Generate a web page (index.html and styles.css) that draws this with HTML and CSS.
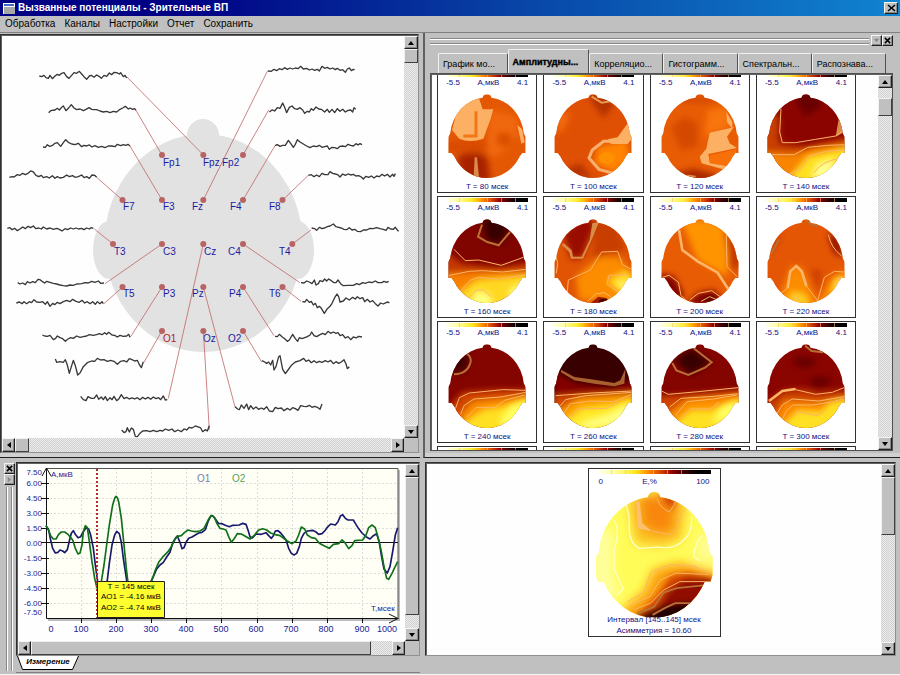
FILE: index.html
```html
<!DOCTYPE html>
<html lang="ru">
<head>
<meta charset="utf-8">
<title>Вызванные потенциалы - Зрительные ВП</title>
<link rel="stylesheet" href="styles.css">
</head>
<body>
<svg class="defs" aria-hidden="true">
  <defs>
    <clipPath id="head">
      <ellipse cx="0" cy="130" rx="111" ry="121"/>
      <circle cx="0" cy="14" r="14"/>
      <path d="M-110 116h220l6 12v48h-10l-6 8h-200l-6-8h-10v-48z"/>
    </clipPath>
    <clipPath id="bighead">
      <ellipse cx="281" cy="303" rx="170" ry="185"/>
      <circle cx="281" cy="121" r="19"/>
      <path d="M112 288h340l9 16v52l-7 22h-346l-6-22v-52z"/>
    </clipPath>
    <filter id="soft" x="-40%" y="-40%" width="180%" height="180%"><feGaussianBlur stdDeviation="9"/></filter>
    <filter id="softer" x="-40%" y="-40%" width="180%" height="180%"><feGaussianBlur stdDeviation="16"/></filter>
  </defs>
</svg>

<header class="title-bar">
  <svg class="app-icon" viewBox="0 0 12 11" aria-hidden="true"><path fill="#fff" d="M0 0h12v11H0z"/><path fill="#a8a8a8" d="M1 4h11v7H1z"/><path fill="#4468c8" d="M1 1h10v2H1z"/></svg>
  <h1>Вызванные потенциалы - Зрительные ВП</h1>
  <button class="btn close-main" aria-label="Закрыть"><svg viewBox="0 0 9 8"><path d="M1 1l7 6M8 1L1 7" stroke="#000" stroke-width="1.6"/></svg></button>
</header>
<nav class="menu">
  <button>Обработка</button><button>Каналы</button><button>Настройки</button><button>Отчет</button><button>Сохранить</button>
</nav>

<main class="workspace">
  <section class="pane montage">
    <div class="scroller">
      <div class="view">
        <svg class="montage-map" viewBox="2 36 402 402" role="img" aria-label="Схема отведений">
          <g fill="#e2e2e2">
            <ellipse cx="203.500" cy="243" rx="99" ry="109"/><circle cx="203" cy="135" r="16"/>
            <ellipse cx="109" cy="250" rx="16" ry="29"/><ellipse cx="298" cy="250" rx="16" ry="29"/>
          </g>
          <g class="labels">
            <text x="163" y="166">Fp1</text><text x="203" y="166">Fpz</text><text x="222" y="166">Fp2</text>
            <text x="123" y="210">F7</text><text x="163" y="210">F3</text><text x="192" y="210">Fz</text><text x="230" y="210">F4</text><text x="269" y="210">F8</text>
            <text x="114" y="255">T3</text><text x="163" y="255">C3</text><text x="204" y="255">Cz</text><text x="228" y="255">C4</text><text x="279" y="255">T4</text>
            <text x="123" y="297">T5</text><text x="163" y="297">P3</text><text x="192" y="297">Pz</text><text x="229" y="297">P4</text><text x="269" y="297">T6</text>
            <text class="picked" x="163" y="342">O1</text><text x="203" y="342">Oz</text><text x="228" y="342">O2</text>
          </g>
          <g transform="scale(.33333)">
            <path class="lead" d="M380 230L610 465M408 331L486 465M390 438L486 600M290 532L367 600M803 212L610 600M806 330L729 465M825 437L729 600M925 526L848 600"/>
            <g class="wave">
              <polyline points="118,228 125,230 132,226 138,233 145,235 150,226 157,236 165,228 172,223 178,226 185,220 192,218 200,230 207,235 215,226 222,218 230,220 238,214 245,222 252,230 260,238 268,228 274,226 282,232 290,225 297,229 304,235 312,226 320,229 328,219 335,224 342,217 350,218 358,222 362,218 370,230 375,226 380,234"/>
              <polyline points="146,338 152,332 165,330 172,325 178,330 185,322 190,318 198,332 205,325 214,314 222,324 230,329 240,327 250,332 258,328 267,323 275,328 282,329 290,329 300,333 310,336 320,334 330,338 340,334 350,336 360,328 368,324 376,319 385,327 390,324 398,328 404,326 408,331"/>
              <polyline points="129,441 136,442 142,434 148,439 156,437 165,430 172,428 182,439 190,428 197,419 205,427 215,432 225,434 235,430 245,440 252,436 260,438 268,435 276,441 285,437 295,442 305,439 315,443 325,438 335,438 345,440 352,433 362,437 370,434 378,436 384,433 390,438"/>
              <polyline points="28,532 36,530 42,531 52,524 60,526 68,520 76,524 84,520 92,513 100,516 108,526 116,530 124,526 130,533 140,530 148,534 157,527 165,535 172,530 180,534 190,532 200,525 208,530 218,527 225,532 235,530 245,525 252,533 260,530 268,535 276,525 284,526 290,532"/>
            </g>
          </g>
          <g transform="translate(0 225) scale(.33333)">
            <path class="lead" d="M283 12L339 57M486 57L315 176M368 186L312 236M486 186L392 335M486 317L432 412M610 57L505 520M610 317L628 615M610 186L705 546M729 57L900 173M848 186L903 229M729 186L822 332M729 317L785 411M877 57L933 15"/>
            <g class="wave">
              <polyline points="22,10 30,8 36,14 44,10 52,17 60,12 68,6 76,11 84,4 92,8 100,3 108,11 116,9 124,12 130,6 140,12 150,9 160,13 170,10 178,13 186,18 195,11 203,14 212,9 220,12 228,9 236,12 244,10 252,14 260,9 268,12 274,8 280,10"/>
              <polyline points="53,173 60,177 68,174 76,179 82,170 90,174 98,170 106,173 114,163 120,164 126,169 134,174 140,169 150,172 160,175 170,177 180,180 190,182 200,183 210,180 220,181 230,177 245,176 255,173 265,174 275,169 285,172 295,168 302,175 312,174"/>
              <polyline points="49,234 58,231 66,236 72,230 80,236 88,230 95,233 102,224 110,231 120,232 128,230 136,238 142,230 150,244 158,235 164,239 172,232 180,236 190,230 200,226 210,230 218,223 228,229 238,232 246,226 254,234 262,230 270,236 278,230 286,238 292,230 300,236 306,230 310,236"/>
              <polyline points="127,330 134,333 142,334 150,331 160,344 166,341 172,333 180,338 188,341 196,349 204,342 212,338 220,340 230,333 240,337 250,335 260,333 268,329 280,331 290,329 298,326 306,329 314,323 320,328 326,322 336,330 344,331 352,336 360,331 370,334 380,333 386,328 390,337"/>
              <polyline points="166,402 170,412 180,410 190,412 196,404 202,420 208,445 214,425 220,406 226,422 233,450 240,444 250,425 262,413 275,408 284,409 292,400 302,405 312,404 322,409 332,406 342,409 352,418 362,409 372,407 380,411 388,401 396,404 404,408 412,406 418,419 424,428 430,410"/>
              <polyline points="242,514 250,524 258,527 264,515 274,520 282,520 290,510 296,523 304,516 310,524 316,515 322,527 330,518 336,524 342,514 350,527 357,521 364,509 372,521 380,517 388,522 396,519 404,522 412,518 420,524 428,517 436,522 444,517 452,523 460,516 468,521 476,518 482,524 490,513 496,525 502,524"/>
              <polyline points="365,615 372,623 378,620 382,608 388,621 394,609 400,613 406,634 412,635 420,625 428,618 440,617 450,620 460,616 470,620 480,616 488,618 496,612 506,616 516,612 524,620 534,615 544,620 552,612 560,615 568,607 576,609 586,603 594,606 602,609 608,620 616,614 622,618 628,602"/>
            </g>
          </g>
          <g class="wave" transform="translate(200 30) scale(.33333)">
            <polyline points="204,123 214,124 222,118 230,122 238,116 246,119 254,113 262,118 270,114 278,117 286,114 294,116 302,109 310,117 320,115 328,120 336,117 344,121 352,118 358,123 366,109 374,115 382,112 390,117 398,114 406,119 412,115 420,121 428,119 436,127 442,117 448,114 454,122 460,118 464,120"/>
            <polyline points="208,246 216,240 224,243 232,233 240,235 248,219 254,232 260,248 268,232 276,228 284,236 292,238 300,233 308,240 314,250 322,244 328,246 334,236 340,241 348,231 356,237 364,238 374,246 382,238 388,247 396,238 404,248 412,236 420,244 428,238 436,246 444,241 452,240 458,246 462,233 467,238"/>
            <polyline points="225,347 232,344 240,349 248,346 256,346 265,331 272,340 280,352 286,343 292,329 300,336 310,342 320,348 330,353 340,348 350,350 358,346 366,352 374,350 382,348 388,358 396,352 404,353 412,356 420,349 428,348 436,350 444,343 452,346 460,348 468,341 474,345 480,341 486,344"/>
            <polyline points="325,436 334,434 342,440 350,435 358,440 366,430 374,434 384,434 390,425 398,430 406,432 414,435 420,441 428,432 436,436 444,432 452,435 460,433 468,438 476,437 484,441 490,447 498,439 506,442 514,438 522,444 530,438 538,440 546,433 554,438 562,433 570,441 578,433 582,439 586,431"/>
            <polyline points="335,594 344,596 350,601 358,592 366,596 374,594 382,590 390,588 400,582 408,590 416,592 424,594 432,598 440,599 448,593 456,600 464,598 472,604 482,605 490,600 500,600 510,595 520,596 530,593 540,596 550,598 558,601 564,592 572,597 580,598 586,592 592,600 596,604"/>
          </g>
          <g class="wave" transform="translate(200 240) scale(.33333)">
            <polyline points="303,128 312,129 320,123 328,126 336,131 343,120 348,135 355,131 360,122 368,125 374,117 380,123 386,117 394,122 402,128 408,128 414,120 422,131 430,137 445,136 460,136 470,131 478,134 488,128 496,130 506,126 516,128 526,123 534,128 545,128 552,124 560,127 566,124"/>
            <polyline points="307,185 315,186 320,178 328,187 334,184 340,195 346,190 352,203 358,199 364,205 373,220 382,206 390,199 396,190 404,173 411,162 416,170 420,186 430,183 438,174 448,180 458,172 466,177 472,170 480,176 488,173 494,185 502,178 510,186 518,182 526,191 534,198 542,189 550,192 558,188 564,186 568,189"/>
            <polyline points="225,289 232,290 238,283 246,290 254,296 262,304 268,300 278,283 286,296 293,304 298,293 306,296 314,293 322,290 330,285 335,276 342,287 350,290 360,284 368,280 376,284 384,274 392,280 400,276 408,280 414,278 420,287 428,284 436,294 444,290 452,299 460,291 468,294 476,289 486,291"/>
            <polyline points="186,362 194,366 200,370 206,366 212,375 218,361 222,390 228,380 236,350 240,347 248,388 256,401 264,390 274,376 286,366 300,362 311,355 318,364 326,360 334,368 342,362 350,368 358,364 366,367 376,362 384,366 392,361 400,371 408,365 416,370 424,366 432,359 438,372 442,386 448,380"/>
            <polyline points="105,500 113,507 118,509 124,495 132,505 140,492 146,509 152,497 160,507 168,501 176,508 184,504 192,508 200,500 208,513 218,515 226,502 234,506 244,504 252,512 262,505 270,510 278,503 286,506 294,511 302,497 312,499 320,500 328,496 336,502 344,499 352,502 360,508 366,492"/>
          </g>
          <g fill="#b96464">
            <circle cx="162" cy="155" r="3"/><circle cx="203.300" cy="155" r="3"/><circle cx="243" cy="155" r="3"/>
            <circle cx="122.500" cy="200" r="3"/><circle cx="162" cy="200" r="3"/><circle cx="203.300" cy="200" r="3"/><circle cx="243" cy="200" r="3"/><circle cx="282.500" cy="200" r="3"/>
            <circle cx="113" cy="244" r="3"/><circle cx="162" cy="244" r="3"/><circle cx="203.300" cy="244" r="3"/><circle cx="243" cy="244" r="3"/><circle cx="292.300" cy="244" r="3"/>
            <circle cx="122.500" cy="287" r="3"/><circle cx="162" cy="287" r="3"/><circle cx="203.300" cy="287" r="3"/><circle cx="243" cy="287" r="3"/><circle cx="282.500" cy="287" r="3"/>
            <circle cx="162" cy="331" r="3"/><circle cx="203.300" cy="331" r="3"/><circle cx="243" cy="331" r="3"/>
          </g>
        </svg>
      </div>
      <div class="vbar"><button class="btn arrow up" aria-label="Вверх"></button><span class="thumb short"></span><button class="btn arrow down last" aria-label="Вниз"></button></div>
      <div class="hbar"><button class="btn arrow left" aria-label="Влево"></button><span class="thumb short"></span><button class="btn arrow right last" aria-label="Вправо"></button></div>
    </div>
  </section>

  <section class="pane maps">
    <div class="grip-row"><span class="grip"></span><button class="btn mini" aria-label="Свернуть"><svg viewBox="0 0 8 8"><path d="M1 2h6L4 6z" fill="#888"/></svg></button><button class="btn mini" aria-label="Закрыть панель"><svg viewBox="0 0 8 8"><path d="M1 1l6 6M7 1L1 7" stroke="#000" stroke-width="1.8"/></svg></button></div>
    <div class="tabs">
      <button class="tab first">График мо...</button><button class="tab active">Амплитудны...</button><button class="tab">Корреляцио...</button><button class="tab">Гистограмм...</button><button class="tab">Спектральн...</button><button class="tab">Распознава...</button>
    </div>
    <div class="scroller maps-scroller">
      <div class="view">
        <div class="cards">
          <figure class="card"><div class="scale"></div><div class="range"><span>-5.5</span><span>А,мкВ</span><span>4.1</span></div>
            <svg viewBox="-117 -1 234 255"><g clip-path="url(#head)"><g transform="translate(-189 -193)">
              <path fill="#e45804" d="M60 180h260v280H60z"/>
              <g filter="url(#soft)"><path fill="#f06808" d="M200 240l80 20v60l-60 60-50-10 20-50z"/><path fill="#a82400" d="M100 380l50-20 40 20 10 80-90-10z"/><path fill="#d84c04" d="M220 310h40v36h-40zM70 330h120v40H70z"/></g>
              <path fill="#fcb064" d="M100 240q20-40 66-32l10 30h32l-8 28-22 60q-40 14-72 0L84 300z"/><path fill="#fcb064" d="M280 285l14 12 8 40-10 4z"/>
              <path fill="none" stroke="#f07818" stroke-width="9" d="M156 244v74h-38"/><path fill="#d88c48" d="M152 382h7l6 60h-16z"/></g></g></svg>
            <figcaption>T = 80 мсек</figcaption></figure>
          <figure class="card"><div class="scale"></div><div class="range"><span>-5.5</span><span>А,мкВ</span><span>4.1</span></div>
            <svg viewBox="-117 -1 234 255"><g clip-path="url(#head)"><g transform="translate(-508 -193)">
              <path fill="#e05004" d="M380 180h260v280H380z"/>
              <g filter="url(#soft)"><path fill="#b43000" d="M490 195h70l10 30-30 40zM400 430l70-30 40 50z"/><path fill="#ff8404" d="M520 350l90-20 10 60-50 40-60-30z"/><path fill="#f46c08" d="M440 250h-40v60l20-10z"/></g>
              <ellipse cx="550" cy="384" rx="24" ry="18" fill="#ff9000"/>
              <path fill="none" stroke="#f8b070" stroke-width="9" d="M610 334h-70l-34 26-10 24 30 34 44 12"/><path fill="#fcb064" d="M612 280l-30 42-30 6 10 14h50l16-20z"/><path fill="none" stroke="#e89850" stroke-width="6" d="M504 200l30 18 28-4"/></g></g></svg>
            <figcaption>T = 100 мсек</figcaption></figure>
          <figure class="card"><div class="scale"></div><div class="range"><span>-5.5</span><span>А,мкВ</span><span>4.1</span></div>
            <svg viewBox="-117 -1 234 255"><g clip-path="url(#head)"><g transform="translate(-167 -193)">
              <path fill="#e85c04" d="M40 180h260v280H40z"/>
              <g filter="url(#soft)"><path fill="#d44804" d="M80 290l40-30 40 20v70l-50 10zM110 200h100v20H110z"/><path fill="#a82800" d="M90 430l60-14 70 20v30H90z"/><path fill="#f87408" d="M190 240l60-10 10 60-80 30z"/></g>
              <path fill="#fcb064" d="M246 246l18 30v20l-16-20zM196 308l72-16-20 28 8 20 22 14-86 18 4 24 56 12-8 12-72-20-6-20 20-24z"/><path fill="#f87008" d="M196 376l80-18v30l-30 20-50-8z"/><path fill="none" stroke="#d88c48" stroke-width="5" d="M128 436l26 4"/></g></g></svg>
            <figcaption>T = 120 мсек</figcaption></figure>
          <figure class="card"><div class="scale"></div><div class="range"><span>-5.5</span><span>А,мкВ</span><span>4.1</span></div>
            <svg viewBox="-117 -1 234 255"><g clip-path="url(#head)"><g transform="translate(-485 -193)">
              <path fill="#8c0400" d="M360 180h260v280H360z"/>
              <g filter="url(#soft)"><path fill="#680000" d="M450 190h80v40l-50 30z"/><path fill="#c84000" d="M350 220l54 40v80l80 10 130-30v60H350z"/><path fill="#f88404" d="M350 366l100 6 60-20 110-10v120H350z"/><path fill="#ffe020" d="M440 440l50-60 130-30v110H440z"/></g>
              <path filter="url(#soft)" fill="#ffff90" d="M500 440l20-40 50-16-10 70z"/><path fill="#d88c48" d="M584 262l16 44-26 14z"/>
              <path class="iso" d="M410 236l-4 70 8 32 40 0 60-10 60-10 24-16M370 374l80 0 40-22 60-6 60-2M434 432l40-20 20-34 50-14 56-4M510 428q20-34 80-44"/></g></g></svg>
            <figcaption>T = 140 мсек</figcaption></figure>

          <figure class="card"><div class="scale"></div><div class="range"><span>-5.5</span><span>А,мкВ</span><span>4.1</span></div>
            <svg viewBox="-117 -1 234 255"><g clip-path="url(#head)"><g transform="translate(-173 -88)">
              <path fill="#800400" d="M50 80h260v280H50z"/>
              <g filter="url(#soft)"><path fill="#380000" d="M160 80h90l-30 80-50-10z"/><path fill="#c43800" d="M40 180l60 40 110 14 100-20v50H40z"/><path fill="#f88004" d="M40 250l130-6 140 0v100H40z"/><path fill="#ffd820" d="M90 310l50-40 170-16v100H100z"/></g>
              <path filter="url(#soft)" fill="#ffff80" d="M120 345l20-44 40 10 14 40zM240 300l50-30-20 60-30 10z"/>
              <path class="iso dark" d="M158 104l-12 36 28 16 34 10 34-40"/><path class="iso" d="M74 178l34 34 40-2 68 16 66-24M60 256l60-12 40-2 60 4 70-8M94 302l30-32 24-8 60 6 80-14M120 322l22-22h20l24 20"/></g></g></svg>
            <figcaption>T = 160 мсек</figcaption></figure>
          <figure class="card"><div class="scale"></div><div class="range"><span>-5.5</span><span>А,мкВ</span><span>4.1</span></div>
            <svg viewBox="-117 -1 234 255"><g clip-path="url(#head)"><g transform="translate(-492 -88)">
              <path fill="#e05404" d="M370 80h260v280H370z"/>
              <g filter="url(#soft)"><path fill="#980c00" d="M400 130l60-50 40 20-40 100-30 10z"/><path fill="#c83c00" d="M500 90l60 10 30 80-40 10-60 20z"/><path fill="#fc8c04" d="M440 260l70-60 60 0 50 60-40 80-130-10z"/><path fill="#ffd820" d="M536 270l60-30 20 30-30 50z"/></g>
              <path filter="url(#soft)" fill="#ffff80" d="M560 280l40-10-20 28z"/><path fill="#9c1c00" d="M486 338l22-18 24 4 20 20z"/><ellipse cx="523" cy="336" rx="14" ry="10" fill="#480000"/>
              <path fill="#d88c48" d="M490 100l20-4-18 44-30 66h-36l-6-20-22-22 6-4 24 20 4 20 26 0 24-50z"/>
              <path class="iso" d="M414 318l4-48 66-30 34-54 48-2 14 40 28 14M596 254l-56 2-6 26 24 18 16 10M476 334l24-22 26-4 30 20M378 186l8 34-4 30"/></g></g></svg>
            <figcaption>T = 180 мсек</figcaption></figure>
          <figure class="card"><div class="scale"></div><div class="range"><span>-5.5</span><span>А,мкВ</span><span>4.1</span></div>
            <svg viewBox="-117 -1 234 255"><g clip-path="url(#head)"><g transform="translate(-167 -88)">
              <path fill="#e85c04" d="M40 80h260v280H40z"/>
              <g filter="url(#soft)"><path fill="#ff9404" d="M110 90h120l20 100 0 70-90-50z"/><path fill="#800400" d="M40 250l50 10 30 60-40 20zM120 350l40-40 50-10 30 40z"/><path fill="#c43800" d="M250 120l40 60v60l-34-10z"/></g>
              <path filter="url(#soft)" fill="#300000" d="M170 340l26-18 26 14z"/>
              <path class="iso wide" d="M104 120l10 60 46 34 60 34 32 50"/><path class="iso" d="M246 134l2 96 30 30M54 262l20-6 28 20 8 40 20 20M136 330l26-20 40-8 28 20M170 334l26-14 24 10"/></g></g></svg>
            <figcaption>T = 200 мсек</figcaption></figure>
          <figure class="card"><div class="scale"></div><div class="range"><span>-5.5</span><span>А,мкВ</span><span>4.1</span></div>
            <svg viewBox="-117 -1 234 255"><g clip-path="url(#head)"><g transform="translate(-485 -88)">
              <path fill="#e45604" d="M360 80h260v280H360z"/>
              <g filter="url(#soft)"><path fill="#c83c00" d="M500 240h30l-6 70zM370 200l40-60-30-10z"/><path fill="#8c0c00" d="M550 130l30 10 20 60-30-10z"/><path fill="#fc8c04" d="M400 340l40-110 30 0 50 110 40-80 50-20v110z"/><path fill="#ffd020" d="M430 345l10-40 40 6 20 40zM560 290l30-30 20 10-40 60z"/></g>
              <path filter="url(#soft)" fill="#ffff70" d="M570 280l20-20v30z"/>
              <path class="iso wide" d="M430 294l8-50 18-16 16 16 14 44"/><path class="iso" d="M410 310l20-16M486 288l34 44 20-70 30-18 30 2M444 334l4-10 12-2 6 12M574 290l10-26 10-4M552 134q8 40 40 64"/><path class="iso dark" d="M484 90l18 14 20 4M404 148l-24 44"/></g></g></svg>
            <figcaption>T = 220 мсек</figcaption></figure>

          <figure class="card"><div class="scale"></div><div class="range"><span>-5.5</span><span>А,мкВ</span><span>4.1</span></div>
            <svg viewBox="-117 -1 234 255"><g clip-path="url(#head)"><g transform="translate(-173 -462)">
              <path fill="#840400" d="M50 450h260v280H50z"/>
              <g filter="url(#soft)"><path fill="#400000" d="M60 490h60l-10 50-40 10z"/><path fill="#d04400" d="M60 650l40-44 100-8 110 0v130H90z"/><path fill="#fc9004" d="M90 680l40-46 80-8 100-10v120H90z"/><path fill="#ffe020" d="M100 700l60-40 60-10 90-30v120H100z"/></g>
              <path filter="url(#soft)" fill="#ffff60" d="M210 690l30-40 50-20-10 50-60 30z"/>
              <path class="iso dark" d="M112 490q14 8 12 24-8 36-50 38"/><path class="iso" d="M78 656l12-34 30-14 100-10 70 2M94 672l10-26 30-20 80-6 76-14M112 680l28-28h56l30-22 60-16"/></g></g></svg>
            <figcaption>T = 240 мсек</figcaption></figure>
          <figure class="card"><div class="scale"></div><div class="range"><span>-5.5</span><span>А,мкВ</span><span>4.1</span></div>
            <svg viewBox="-117 -1 234 255"><g clip-path="url(#head)"><g transform="translate(-492 -462)">
              <path fill="#380000" d="M370 450h260v280H370z"/>
              <g filter="url(#soft)"><path fill="#840400" d="M370 540l70 36 110 14 70-30v60H370z"/><path fill="#d44800" d="M370 616l120-8 130-6v130H370z"/><path fill="#fca004" d="M390 660l60-36 170-12v120H390z"/><path fill="#ffe828" d="M410 690l50-36 90-10 70-20v110H400z"/></g>
              <path filter="url(#soft)" fill="#ffff80" d="M440 700l100-30 60-34-20 60-100 20z"/>
              <path fill="#a8602c" d="M590 534l-4 46-30 8-60-8-60-10-40-24 0-8 40 22 60 8 60 10 18-8z"/><path class="iso" d="M380 616l110-8 120-6M390 650l20-22 60-12 140-10M404 670l20-30 60-8 70 2 60-24M424 680l20-24 90-2 30-18"/></g></g></svg>
            <figcaption>T = 260 мсек</figcaption></figure>
          <figure class="card"><div class="scale"></div><div class="range"><span>-5.5</span><span>А,мкВ</span><span>4.1</span></div>
            <svg viewBox="-117 -1 234 255"><g clip-path="url(#head)"><g transform="translate(-167 -462)">
              <path fill="#840400" d="M40 450h260v280H40z"/>
              <g filter="url(#soft)"><path fill="#380000" d="M90 510l50-36 60 40-60 40z"/><path fill="#d04400" d="M40 618l110-8 150-12v130H40z"/><path fill="#fc9004" d="M70 670l60-44 170-14v120H70z"/><path fill="#ffe020" d="M90 700l50-40 60 0 100-36v110H90z"/></g>
              <path filter="url(#soft)" fill="#ffff60" d="M200 700l30-50 50-20-10 50z"/>
              <path class="iso dark" d="M148 474l54 42-20 16-50 22-36-14-12-22"/><path class="iso" d="M52 602l20 10 90-8 120-12M76 650l34-26 100-6 70-8M94 674l34-40 80-8 70-12M110 682l28-26h60l26-20"/></g></g></svg>
            <figcaption>T = 280 мсек</figcaption></figure>
          <figure class="card"><div class="scale"></div><div class="range"><span>-5.5</span><span>А,мкВ</span><span>4.1</span></div>
            <svg viewBox="-117 -1 234 255"><g clip-path="url(#head)"><g transform="translate(-485 -462)">
              <path fill="#8a0400" d="M360 450h260v280H360z"/>
              <g filter="url(#soft)"><path fill="#680000" d="M500 560h60l-10 30h-50zM450 500h60v30h-60z"/><path fill="#c83c00" d="M360 640l60-40 60-4 40 12 90-10v130H370z"/><path fill="#fc8804" d="M390 680l30-50 100 4 100-16v110H390z"/><path fill="#ffe020" d="M420 700l40-40 70 4 30-30 60-10v110H400z"/></g>
              <path class="iso dark" d="M482 466l20 16 34 4"/><path class="iso wide" d="M374 632l40-30 40-6"/><path class="iso" d="M454 598l60 14 50-6 40-16M394 676l20-32 30-18 80 6 80-14M412 692l14-30 20-18 60 0 60-10 30-8M450 676l10-12 60 12 18-14"/></g></g></svg>
            <figcaption>T = 300 мсек</figcaption></figure>

          <figure class="card"><div class="scale"></div></figure><figure class="card"><div class="scale"></div></figure><figure class="card"><div class="scale"></div></figure><figure class="card"><div class="scale"></div></figure>
        </div>
      </div>
      <div class="vbar"><button class="btn arrow up" aria-label="Вверх"></button><span class="thumb maps-thumb"></span><button class="btn arrow down last" aria-label="Вниз"></button></div>
    </div>
  </section>

  <section class="pane chart">
    <div class="side-grip"><button class="btn mini" aria-label="Закрыть панель"><svg viewBox="0 0 8 8"><path d="M1 1l6 6M7 1L1 7" stroke="#000" stroke-width="1.8"/></svg></button><button class="btn mini" aria-label="Развернуть"><svg viewBox="0 0 8 8"><path d="M2 1v6l4-3z" fill="#888"/></svg></button><span class="grip upright"></span></div>
    <div class="chart-body">
      <div class="scroller">
        <div class="view">
          <svg class="plot" viewBox="18 464 388 177" role="img" aria-label="Амплитуда по каналам O1 и O2">
            <path fill="#bcbcbc" d="M48 470h352v151H48z"/>
            <path fill="#fffff6" d="M46 468h352v150H46z"/>
            <path class="gridlines" d="M46 483.500h352M46 498.500h352M46 513.500h352M46 528.500h352M46 558.500h352M46 573.500h352M46 588.500h352M46 603.500h352M81.500 468v150M116.500 468v150M151.500 468v150M186.500 468v150M221.500 468v150M257.500 468v150M292.500 468v150M327.500 468v150M362.500 468v150"/>
            <path fill="none" stroke="#555" d="M46 468.500h352v150"/>
            <path fill="none" stroke="#111" d="M46.500 468v150.500h352M46 542.500h352M41 483.500h8M41 498.500h8M41 513.500h8M41 528.500h8M41 542.500h5M41 558.500h8M41 573.500h8M41 588.500h8M41 603.500h8M81.500 619v4M116.500 619v4M151.500 619v4M186.500 619v4M221.500 619v4M257.500 619v4M292.500 619v4M327.500 619v4M362.500 619v4M42 476l4.500-8 4.500 8M389 614l9 4.500-9 4.500"/>
            <g transform="translate(0 455) scale(.33333)" fill="none" stroke-width="5" stroke-linejoin="round">
              <g stroke="#18186c">
                <polyline points="138,212 146,225 152,255 158,280 166,294 174,292 180,285 188,288 194,293 202,284 208,258 214,235 220,227 226,238 234,248 242,245 250,230 258,218 266,222 272,240 280,280 286,330 292,372 294,400"/>
                <polyline points="318,400 322,375 328,325 336,270 344,240 350,229 358,236 364,262 370,310 376,350 382,390"/>
                <polyline points="450,385 460,365 470,342 480,330 490,322 500,306 510,292 518,264 526,250 532,243 540,262 546,281 552,278 558,262 566,250 576,246 586,240 596,234 606,232 616,224 624,200 632,184 638,182 646,192 655,205 666,206 676,211 688,215 698,211 718,210 728,205 738,208 744,225 750,245 757,249 768,237 784,238 798,233 806,242 814,250 820,242 826,228 834,227 842,234 850,244 858,255 866,280 874,295 882,300 890,295 898,275 904,250 912,235 922,228 938,226 948,231 956,238 966,236 974,228 982,217 992,207 1006,210 1014,200 1022,182 1028,179 1036,190 1044,195 1060,195 1066,205 1074,218 1086,234 1098,245 1110,252 1120,242 1130,236 1138,262 1144,300 1152,342 1162,354 1170,335 1178,290 1186,240 1193,218"/>
              </g>
              <g stroke="#107018">
                <polyline points="138,212 144,222 152,242 160,252 168,252 176,238 184,231 194,231 204,238 212,248 218,255 226,280 234,297 240,294 246,270 250,230 256,212 262,218 268,260 276,320 284,370 291,400"/>
                <polyline points="304,380 312,330 320,270 328,210 338,150 344,130 348,124 352,128 356,140 364,190 372,270 380,350 386,400"/>
                <polyline points="446,390 456,375 466,345 476,322 490,304 504,290 514,275 524,255 532,244 544,242 554,232 564,225 574,228 586,230 600,228 612,220 624,196 634,181 644,188 650,204 660,220 670,222 678,225 686,245 694,262 702,252 712,236 724,237 736,244 750,252 762,242 776,225 788,221 800,225 812,234 826,239 840,242 850,249 862,258 876,266 888,258 896,240 904,216 914,222 922,240 934,248 946,250 958,265 972,272 988,280 1000,268 1016,266 1026,255 1034,262 1046,281 1056,272 1064,257 1088,255 1098,240 1106,218 1116,210 1126,218 1136,255 1144,290 1152,335 1160,370 1166,373 1176,355 1184,338 1193,320"/>
              </g>
            </g>
            <path class="cursor" d="M97 469v149"/>
            <g class="y-axis">
              <text x="42" y="475">7.50</text><text x="42" y="486">6.00</text><text x="42" y="501">4.50</text><text x="42" y="516">3.00</text><text x="42" y="531">1.50</text><text x="42" y="546">0.00</text><text x="42" y="561">-1.50</text><text x="42" y="576">-3.00</text><text x="42" y="591">-4.50</text><text x="42" y="606">-6.00</text><text x="42" y="615">-7.50</text>
            </g>
            <g class="x-axis">
              <text x="51" y="632">0</text><text x="81" y="632">100</text><text x="116" y="632">200</text><text x="151" y="632">300</text><text x="186" y="632">400</text><text x="221" y="632">500</text><text x="256" y="632">600</text><text x="291" y="632">700</text><text x="326" y="632">800</text><text x="362" y="632">900</text><text x="387" y="632">1000</text>
            </g>
            <g class="unit"><text x="51" y="477">А,мкВ</text><text x="371" y="611">T,мсек</text></g>
            <g class="legend"><text x="197" y="482" fill="#7c7cac">O1</text><text x="232" y="482" fill="#58a058">O2</text></g>
            <path fill="#ffff30" stroke="#222" d="M97.500 581.500h67v36h-67z"/>
            <g class="readout"><text x="131" y="589">T = 145 мсек</text><text x="131" y="599">AO1 = -4.16 мкВ</text><text x="131" y="610">AO2 = -4.74 мкВ</text></g>
          </svg>
        </div>
        <div class="vbar"><button class="btn arrow up" aria-label="Вверх"></button><span class="thumb tall"></span><button class="btn arrow down last" aria-label="Вниз"></button></div>
        <div class="hbar"><button class="btn arrow left" aria-label="Влево"></button><span class="thumb long"></span><button class="btn arrow right last" aria-label="Вправо"></button></div>
      </div>
      <div class="sheet-row"><button class="sheet"><svg viewBox="0 0 62 14" preserveAspectRatio="none" aria-hidden="true"><path fill="#fff" stroke="#000" d="M.5 0l5 13.500h50L61.500 0"/></svg><span>Измерение</span></button></div>
    </div>
  </section>

  <section class="pane asym">
    <div class="scroller asym-scroller">
      <div class="view">
        <figure class="card big"><div class="scale"></div><div class="range"><span>0</span><span>Е,%</span><span>100</span></div>
          <svg viewBox="100 100 364 390"><g clip-path="url(#bighead)">
            <path fill="#fffc58" d="M90 90h390v410H90z"/>
            <g filter="url(#softer)">
              <path fill="#ffff9c" d="M90 220h66v140l20 50-40 40-46-60z"/><path fill="#fffc98" d="M420 230l50 20v70l-60-10z"/>
              <path fill="#fcc020" d="M200 120h180l-16 130-60 18-80-6z"/><path fill="#f88808" d="M236 110h110l-4 110-40 14-60-24z"/>
              <path fill="#fca010" d="M180 470l70-60 30-70 80-20 110 30v150H180z"/>
            </g>
            <g filter="url(#soft)">
              <path fill="#d44400" d="M296 110l60 0-20 50zM210 500l80-80 40-60 60-10 80 20v130z"/>
              <path fill="#900c00" d="M270 500l50-90 50-40 90-2 10 130z"/><path fill="#280000" d="M210 500l70-30 100-26 80-4v60z"/>
            </g>
            <path filter="url(#soft)" fill="#200000" d="M230 492l90-36 90-4v44z"/>
            <path class="iso pale" d="M158 190q20 30 0 90v60l28 60-20 20M192 140q16 30 12 70 0 50 30 66l60-4q50 10 80-24 24-20 22-70M430 236q-24 20-28 66l20 12"/>
            <path fill="#fcc070" d="M226 132l10 0 8 66 30 26-44-10z"/><path class="iso" d="M274 222l56 12 20-20q6-40 28-60M290 124q10 30 38 40 16-20 20-36M200 440l50-30 20-60 60-24 70 4 50 20M208 450l60-26 30-50 50-22 100 4M220 464l50-20 40-40 50-26 90 0"/>
            <path class="iso dark" d="M230 476l50-20 30-44 40-14 96-10M276 480l40-22 30-14h80"/>
          </g></svg>
          <figcaption>Интервал [145..145] мсек<br>Асимметрия = 10.60</figcaption></figure>
      </div>
      <div class="vbar"><button class="btn arrow up" aria-label="Вверх"></button><span class="thumb mid"></span><button class="btn arrow down last" aria-label="Вниз"></button></div>
    </div>
  </section>
</main>
</body>
</html>
```
FILE: styles.css
```css
* { box-sizing: border-box; }
html, body { height: 100%; margin: 0; }
body {
  display: flex;
  flex-direction: column;
  overflow: hidden;
  background: #c0c0c0;
  color: #000;
  font: 10px/12px "Liberation Sans", Arial, sans-serif;
  border-bottom: 1px solid #f4f4f4;
}
button { font: inherit; color: inherit; padding: 0; border: 0; background: none; }
svg { display: block; }
figure { margin: 0; }
.defs { position: absolute; width: 0; height: 0; }

.title-bar {
  display: flex;
  align-items: center;
  flex: 0 0 16px;
  padding: 0 2px 0 3px;
  background: linear-gradient(90deg, #000084 20%, #0848a8 60%, #1084d0);
  color: #fff;
}
.app-icon { width: 12px; height: 11px; margin-right: 3px; }
.title-bar h1 { flex: 1; margin: 0; font-size: 10px; line-height: 14px; }
.menu { display: flex; flex: 0 0 17px; gap: 9px; padding: 0 5px; border-bottom: 1px solid #808080; }

.btn {
  display: grid;
  place-items: center;
  background: #c0c0c0;
  border: 1px solid #f4f4f4;
  border-right-color: #202020;
  border-bottom-color: #202020;
  box-shadow: inset -1px -1px #888;
}
.close-main { width: 14px; height: 12px; }
.close-main svg { width: 9px; height: 8px; }
.mini { width: 11px; height: 11px; flex: none; }
.mini svg { width: 7px; height: 7px; }

.workspace {
  flex: 1;
  min-height: 0;
  display: grid;
  grid-template-columns: 420fr 480fr;
  grid-template-rows: 425fr 216fr;
}
.pane { min-width: 0; min-height: 0; display: flex; }

.scroller {
  flex: 1;
  min-width: 0;
  min-height: 0;
  display: grid;
  grid-template: minmax(0, 1fr) 14px / minmax(0, 1fr) 14px;
  border: 1px solid #909090;
  border-top-color: #303030;
  border-left-color: #303030;
  box-shadow: inset 1px 1px #606060;
  padding: 1px 0 0 1px;
}
.maps-scroller, .asym-scroller { grid-template-rows: minmax(0, 1fr); }
.view { background: #fefefe; overflow: hidden; }
.vbar, .hbar {
  display: flex;
  background: repeating-conic-gradient(#d0d0d0 0 25%, #ececec 0 50%) 0 0 / 2px 2px;
}
.vbar { flex-direction: column; }
.arrow { flex: 0 0 13px; }
.last { margin-top: auto; }
.hbar .last { margin: 0 0 0 auto; }
.arrow::before { content: ""; border: 3px solid transparent; }
.up::before { border-bottom: 4px solid #000; border-top: 0; }
.down::before { border-top: 4px solid #000; border-bottom: 0; }
.left::before { border-right: 4px solid #000; border-left: 0; }
.right::before { border-left: 4px solid #000; border-right: 0; }
.thumb {
  background: #c0c0c0;
  border: 1px solid #f0f0f0;
  border-right-color: #404040;
  border-bottom-color: #404040;
}
.short { flex: 0 0 14px; }
.maps-thumb { flex: 0 0 18px; margin-top: 10px; }
.tall { flex: 0 1 138px; }
.long { flex: 0 1 340px; }
.mid { flex: 0 1 58px; }

.montage { padding: 1px 1px 4px 0; border-bottom: 1px solid #202020; box-shadow: inset 0 -4px #d0d0d0; }
.montage-map { width: 402px; height: 402px; }
.labels { font-size: 10px; fill: #1c1ca0; }
.labels .picked { fill: #b02020; }
.lead { fill: none; stroke: #c06464; stroke-width: 3; stroke-opacity: .8; }
.wave { fill: none; stroke: #383838; stroke-width: 4; stroke-linejoin: round; }

.maps {
  flex-direction: column;
  margin-left: 3px;
  padding: 2px 7px 6px 5px;
  border-left: 2px solid #606060;
  border-bottom: 1px solid #202020;
  box-shadow: inset 0 -4px #d0d0d0;
}
.grip-row { display: flex; align-items: center; flex: 0 0 11px; }
.grip { flex: 1; height: 6px; border: 1px solid #888; border-width: 1px 0; box-shadow: inset 0 1px #fff, 0 1px #fff; }
.grip-row .grip { margin-right: 2px; }
.tabs { display: flex; align-items: flex-end; flex: 0 0 27px; padding: 0 7px 0 8px; }
.tab {
  flex: 74 1 0;
  min-width: 0;
  height: 20px;
  overflow: hidden;
  white-space: nowrap;
  font-size: 9px;
  line-height: 20px;
  text-align: left;
  padding-left: 4px;
  border: 1px solid #f0f0f0;
  border-right-color: #505050;
  border-bottom: 0;
  border-radius: 2px 2px 0 0;
}
.tab.first { flex-grow: 69; }
.tab.active {
  flex-grow: 82;
  height: 24px;
  font-weight: bold;
  line-height: 22px;
  -webkit-text-stroke: .4px #000;
}
.maps-scroller { border-color: #505050; }
.cards {
  display: grid;
  grid-template-columns: repeat(4, 1fr);
  grid-auto-rows: 122px;
  gap: 3px 6px;
  max-width: 419px;
  margin: -4px 0 0 5px;
}
.card {
  display: flex;
  flex-direction: column;
  align-items: center;
  background: #fff;
  border: 1px solid #303030;
  padding-top: 1px;
  color: #101080;
  font-size: 8px;
  line-height: 10px;
  text-align: center;
}
.scale {
  width: 82px;
  height: 4px;
  background:
    repeating-linear-gradient(90deg, transparent 0 13px, rgb(255 190 100 / .6) 13px 14px) 0 0 / 86% 100% no-repeat,
    linear-gradient(90deg, #fffff0, #ffffa0 15%, #ffe820 33%, #ff9000 44%, #e05000 54%, #900000 66%, #300000 78%, #000 88%);
}
.range { display: flex; justify-content: space-between; width: 82px; margin-top: 1px; }
.card svg { width: 78px; height: 85px; margin: 6px 0 3px; }
.iso { fill: none; stroke: #fcb468; stroke-width: 3; }
.iso.wide { stroke-width: 8; }
.iso.dark { stroke: #b87034; stroke-width: 6; }
.iso.pale { stroke: #ffffc0; stroke-width: 4; }

.chart { padding: 4px 0 1px; }
.side-grip { display: flex; flex-direction: column; align-items: center; flex: 0 0 16px; padding: 1px 0 0 2px; }
.upright { width: 6px; height: auto; margin: 2px 0; border-width: 0 1px; box-shadow: inset 1px 0 #fff, 1px 0 #fff; }
.chart-body { flex: 1; min-width: 0; display: flex; flex-direction: column; }
.plot { width: 388px; height: 177px; }
.gridlines { fill: none; stroke: #dcdcdc; stroke-dasharray: 2 2; }
.cursor { fill: none; stroke: #b03030; stroke-width: 2; stroke-dasharray: 2 2; }
.y-axis { font-size: 8px; text-anchor: end; fill: #1c1c90; }
.x-axis { font-size: 9px; text-anchor: middle; fill: #1c1c90; }
.unit { font-size: 8px; fill: #1c1ca0; }
.legend { font-size: 10px; }
.readout { font-size: 8px; text-anchor: middle; }
.sheet-row { flex: 0 0 17px; border-bottom: 1px solid #808080; }
.sheet { display: grid; width: 62px; height: 14px; margin-left: 1px; font: italic bold 8px/12px "Liberation Sans", sans-serif; }
.sheet svg, .sheet span { grid-area: 1 / 1; }
.sheet svg { width: 62px; height: 14px; }

.asym { padding: 4px 4px 18px 5px; }
.asym .view { display: flex; justify-content: center; align-items: flex-start; padding-top: 4px; }
.big { width: 133px; height: 169px; }
.big .scale { width: 113px; }
.big .range { width: 111px; margin-top: 3px; }
.big svg { width: 121px; height: 130px; margin: 4px 0 -4px; }
.big figcaption { line-height: 11px; }
```
